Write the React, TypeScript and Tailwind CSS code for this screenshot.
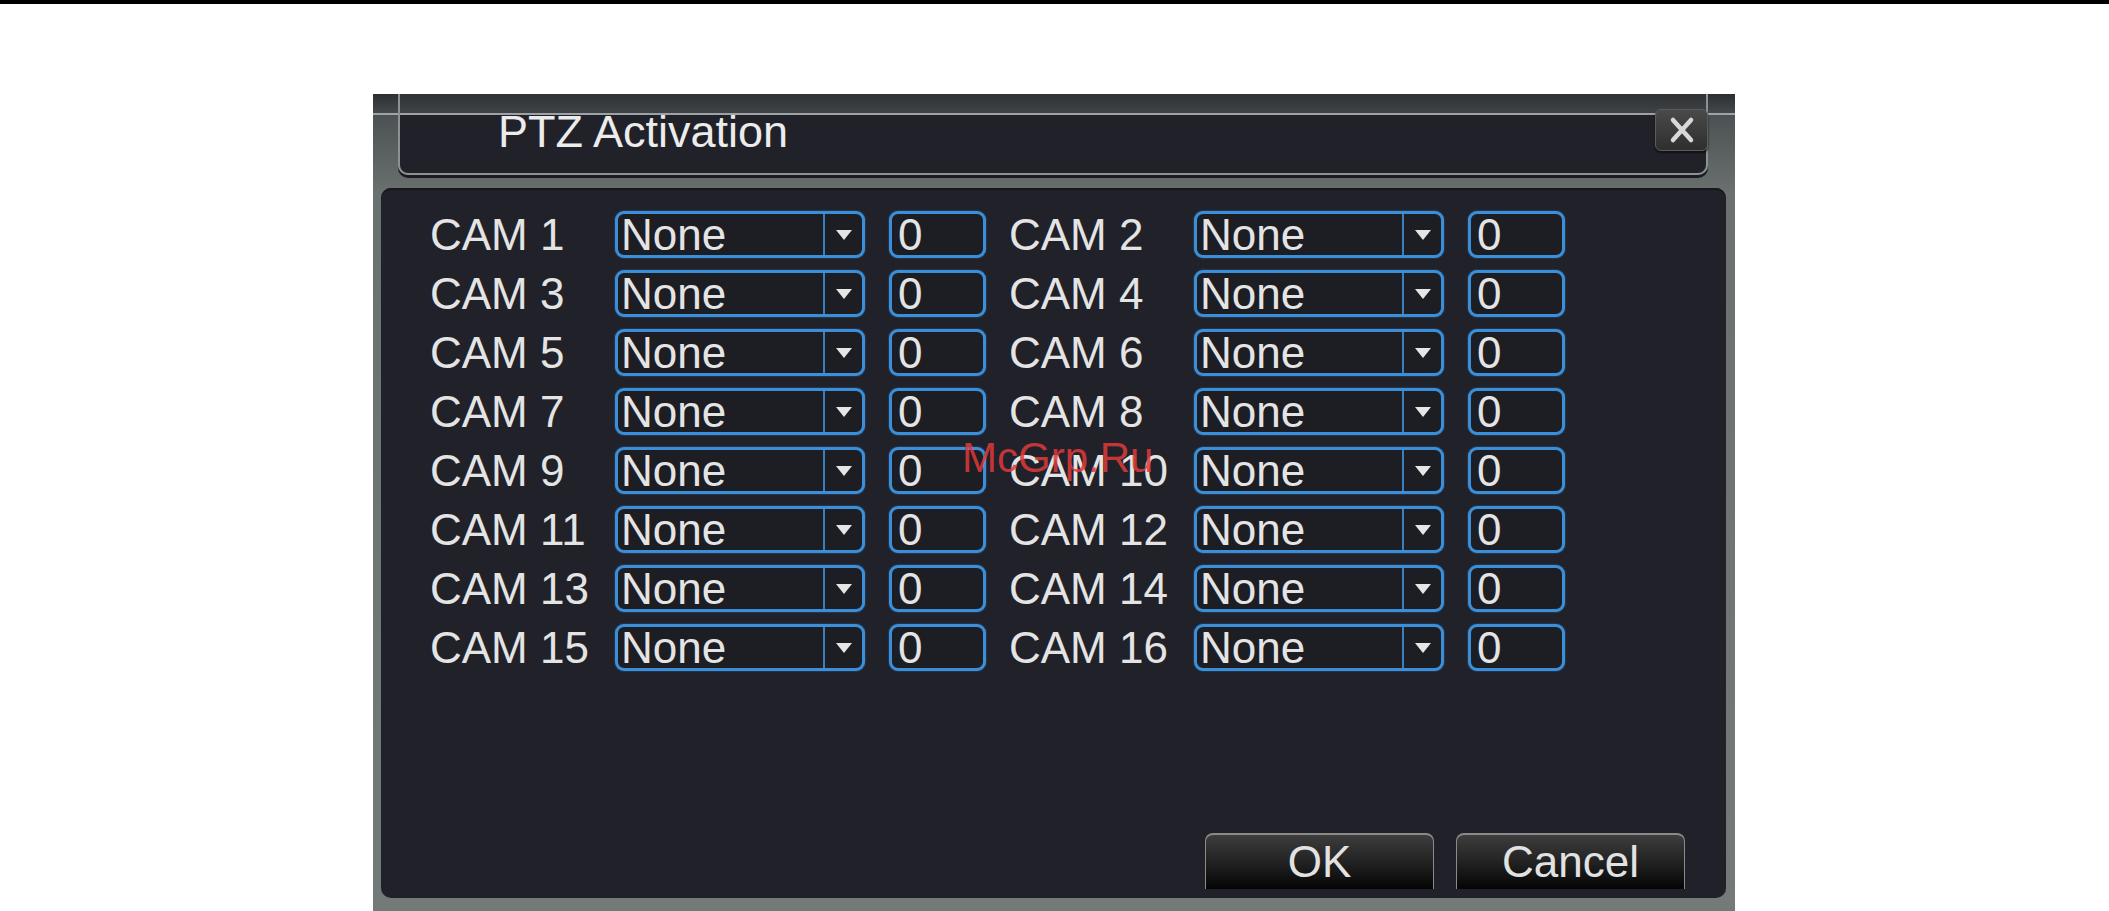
const cams = Array.from({ length: 16 }, (_, i) => i + 1);

function CamRow({ n }: { n: number }) {
  return (
    <div className="flex h-[47px] items-center">
      <div className="w-[185px] text-[44px] leading-none text-[#e4e4e4]">CAM {n}</div>
      {/* protocol select */}
      <div className="flex h-[47px] w-[250px] items-stretch rounded-[9px] border-[3px] border-[#3b8fd9] bg-[#1d1d24] shadow-[0_0_2px_#2a6aa8]">
        <div className="flex flex-1 items-center pl-[3px] text-[44px] leading-none text-[#e4e4e4]">None</div>
        <div className="flex w-[39px] items-center justify-center border-l-2 border-[#3a7fc0]">
          <svg width="16" height="10" viewBox="0 0 16 10">
            <path d="M0 0 H16 L8 10 Z" fill="#e6e6e6" />
          </svg>
        </div>
      </div>
      {/* address */}
      <div className="ml-[24px] flex h-[47px] w-[97px] items-center rounded-[9px] border-[3px] border-[#3b8fd9] bg-[#1d1d24] pl-[6px] text-[44px] leading-none text-[#e4e4e4] shadow-[0_0_2px_#2a6aa8]">
        0
      </div>
    </div>
  );
}

function DlgButton({ label }: { label: string }) {
  return (
    <button className="flex h-[56px] w-[229px] items-center justify-center rounded-t-[8px] border-x border-t-2 border-[#8a8a8a] bg-[linear-gradient(180deg,#3d3d3d_0%,#222_50%,#050505_100%)] text-[44px] leading-none text-[#e2e2e2]">
      {label}
    </button>
  );
}

export default function App() {
  return (
    <div className="relative h-[911px] w-[2109px] overflow-hidden bg-white font-['Liberation_Sans',Arial,sans-serif]">
      <div className="h-[4px] bg-black" />

      {/* dialog frame */}
      <div className="ml-[373px] mt-[90px] flex h-[830px] w-[1362px] flex-col bg-[linear-gradient(180deg,#2c2f32_0px,#45494b_19px,#a0a4a6_19px,#a0a4a6_21px,#4c5153_21px,#6b716f_100px,#737a78_100%)] pl-[8px] pr-[9px]">
        {/* title bar */}
        <div className="ml-[17px] mr-[18px] flex h-[81px] items-start rounded-b-[10px] border-x-2 border-b-2 border-[#8d9193] bg-[linear-gradient(180deg,#2e3234_0px,#3f4345_19px,#9ea2a4_19px,#9ea2a4_21px,#212129_21px)] shadow-[0_3px_0_#1b1c1f]">
          <div className="pl-[98px] pt-[14px] text-[45px] leading-[48px] text-[#ececec]">PTZ Activation</div>
          <div className="ml-auto mr-[-2px] mt-[15px] flex h-[42px] w-[53px] items-center justify-center rounded-[6px] border border-[#5c5c5c] bg-[linear-gradient(180deg,#4a4a4a,#2e2e2e)] shadow-[0_2px_2px_#111]">
            <svg width="30" height="28" viewBox="0 0 30 28">
              <path d="M6 4 L24 24 M24 4 L6 24" stroke="#d8d8d8" strokeWidth="4.5" strokeLinecap="round" />
            </svg>
          </div>
        </div>

        {/* body */}
        <div className="mt-[13px] flex h-[710px] flex-col rounded-[10px] bg-[#212129] pl-[49px] pt-[23px] shadow-[inset_0_2px_0_#17171c]">
          <div className="grid grid-cols-[579px_556px] gap-y-[12px]">
            {cams.map((n) => (
              <CamRow key={n} n={n} />
            ))}
          </div>

          <div className="mt-auto flex justify-end gap-[22px] pb-[9px] pr-[41px]">
            <DlgButton label="OK" />
            <DlgButton label="Cancel" />
          </div>
        </div>
      </div>

      {/* watermark on the source picture */}
      <div className="absolute left-[962px] top-[434px] text-[42px] leading-[48px] text-[#e03a3a]/85">McGrp.Ru</div>
    </div>
  );
}
